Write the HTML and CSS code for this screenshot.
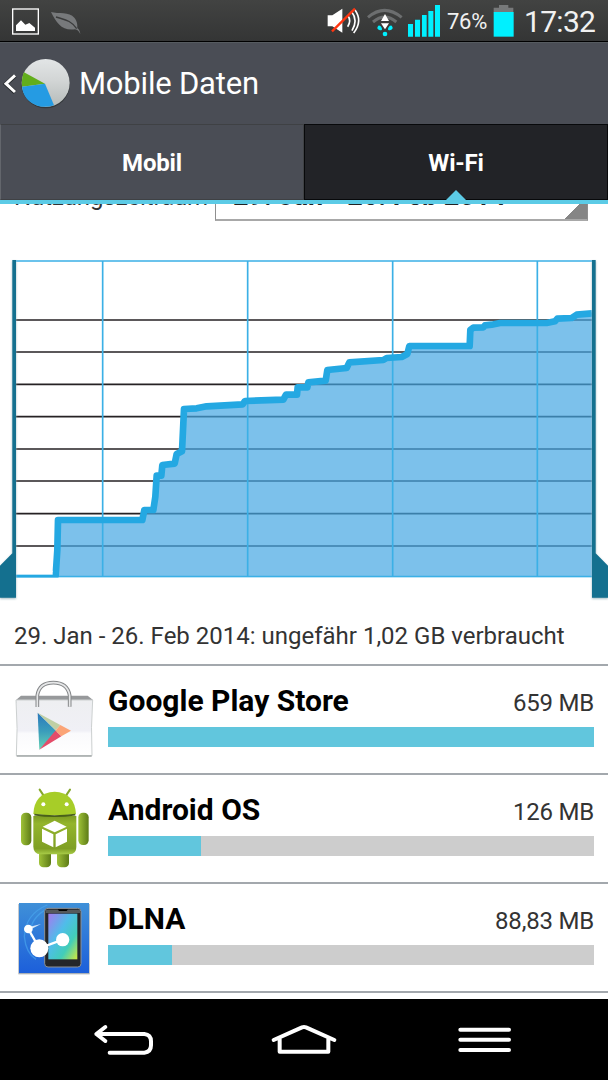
FILE: index.html
```html
<!DOCTYPE html>
<html lang="de">
<head>
  <meta charset="UTF-8" />
  <meta name="viewport" content="width=device-width, initial-scale=1.0"/>
  <title>Mobile Daten</title>
  <link rel="stylesheet" href="styles.css">
</head>
<body>

  <div class="statusbar">
    <svg class="notifications" width="90" height="41" viewBox="0 0 270 123">
      <rect x="38" y="27" width="77" height="75" fill="none" stroke="#fff" stroke-width="4"/>
      <path d="M48 93V76l15-15 13 13 12-5 17 14v10z" fill="#fff"/>
      <path d="M153 36c22 6 55-1 70 17 10 12 9 24 9 31 6 5 8 11 9 18-5-9-9-13-16-14-40 5-55-19-72-52z" fill="#77797b"/>
      <path d="M168 51c25 8 45 9 62 35" fill="none" stroke="#3a3b3b" stroke-width="4"/>
    </svg>
    <svg class="signals" width="117" height="41" viewBox="0 0 351 123">
      <path d="M11 46h14l30-20v72L25 79H11z" fill="#fff"/>
      <path d="M71 46q12 16 0 34M82 34q21 27 2 58M93 30q24 33-4 69" fill="none" stroke="#fff" stroke-width="5"/>
      <path d="M24 94l69-68" stroke="#ff3510" stroke-width="7"/>
      <path d="M132 52q49-42 101 0" fill="none" stroke="#6c6e6f" stroke-width="9"/>
      <path d="M147 66q35-29 70 0" fill="none" stroke="#6c6e6f" stroke-width="9"/>
      <path d="M171 63l12-21 12 21zM171 70h24l-12 18z" fill="#fff"/>
      <path d="M163 77q6-2 10 6 4 8-5 8-13-5-5-14zM203 77q-6-2-10 6-4 8 5 8 13-5 5-14z" fill="#00f0ff"/>
      <circle cx="183" cy="102" r="7" fill="#00f0ff"/>
      <path d="M252 72h15v38h-15zM273 59h15v51h-15zM294 45h14v65h-14zM313 33h15v77h-15zM333 15h15v95h-15z" fill="#00f0ff"/>
    </svg>
    <span class="percent">76%</span>
    <svg class="battery" width="22" height="41" viewBox="0 0 66 123">
      <path d="M18 15h28v8h15v14H2V23h16z" fill="#77797a"/>
      <path d="M2 36h60v74H2z" fill="#00f0ff"/>
    </svg>
    <span class="clock">17:32</span>
  </div>

  <div class="header">
    <svg width="72" height="81" viewBox="0 0 216 243">
      <defs>
        <linearGradient id="pie" x2="0" y2="1">
          <stop offset="0" stop-color="#e2e5e6"/>
          <stop offset=".45" stop-color="#d2d5d5"/>
          <stop offset="1" stop-color="#b5bbb9"/>
        </linearGradient>
      </defs>
      <path d="M45 98l-27 25 27 25" fill="none" stroke="#25282b" stroke-width="13"/>
      <path d="M45 97l-27 25 27 25" fill="none" stroke="#fff" stroke-width="9"/>
      <circle cx="137" cy="123" r="73" fill="#34383b"/>
      <circle cx="137" cy="120" r="72" fill="url(#pie)"/>
      <path d="M135 122L72 88q-8 15-6 43z" fill="#62ae1c"/>
      <path d="M135 122l-69 9q4 42 48 58 24 6 48-2z" fill="#259be3"/>
    </svg>
    <h1>Mobile Daten</h1>
  </div>

  <div class="tabs">
    <div class="tab">Mobil</div>
    <div class="tab active">Wi-Fi</div>
  </div>

  <div class="content">
    <div class="cycle">
      <span class="cycle-label">Nutzungszeitraum</span>
      <div class="spinner"><span>29. Jan - 26. Feb 2014</span></div>
    </div>

    <svg class="chart" width="608" height="360" viewBox="0 0 1824 1080">
      <!-- horizontal grid -->
      <path d="M48 210H1776M48 306H1776M48 403H1776M48 500H1776M48 597H1776M48 693H1776M48 791H1776M48 888H1776" stroke="#262224" stroke-width="5"/>
      <path class="area" d="M167 980L172 900 174 810H430L433 780H462L466 740 470 677H484L487 645 526 641 530 612 546 606 550 477 600 475 728 463 735 453 850 449 858 434H893V412H925V397L980 392 982 360 1040 354 1048 337 1150 330 1160 324 1205 321 1222 312 1228 288H1409L1411 240 1420 233 1450 232 1455 226 1475 224 1480 219H1640L1665 214 1672 206 1715 204 1730 194 1776 190V980z"/>
      <!-- weeks and frame -->
      <path d="M308 33V980M743 33V980M1178 33V980M1612 33V980M48 33H1776M48 980H1776" fill="none" stroke="#3bb0e6" stroke-width="5"/>
      <path class="line" d="M48 977H167L172 900 174 810H427L433 780H460L466 740 470 677H484L487 645 524 641 530 612 546 604 552 477 590 475 620 469 728 463 735 453 850 449 858 434H891L893 412H922L925 397 977 392 982 360 1040 354 1048 337 1150 330 1160 324 1205 321 1222 312 1228 288H1409L1411 240 1420 233 1450 232 1455 226 1475 224 1500 219H1640L1665 214 1672 206 1715 204 1730 194 1776 190"/>
      <rect x="46" y="983" width="1732" height="10" fill="#fff"/>
      <rect x="46" y="962" width="112" height="12" fill="#fff"/>
      <path class="handle" d="M37 30H48V1043H0V947L37 910zM1776 30H1787V910L1824 947V1043H1776z"/>
    </svg>

    <div class="summary"><span>29. Jan - 26. Feb 2014: ungefähr 1,02 GB verbraucht</span></div>

    <div class="app">
      <svg class="icon" width="108" height="107" viewBox="0 0 324 321">
        <defs>
          <linearGradient id="bag" x2="0" y2="1">
            <stop offset="0" stop-color="#eeeff1"/>
            <stop offset=".55" stop-color="#f0f0f6"/>
            <stop offset=".6" stop-color="#fafafc"/>
            <stop offset="1" stop-color="#fff"/>
          </linearGradient>
          <linearGradient id="play" x2="0" y2="1">
            <stop offset="0" stop-color="#2b78bd"/>
            <stop offset=".5" stop-color="#3a9dbb"/>
            <stop offset="1" stop-color="#69d3b5"/>
          </linearGradient>
        </defs>
        <path d="M49 101l14-12h200l15 12-2 10H48z" fill="#97999b"/>
        <path d="M48 102h230q-6 80-2 167H49q5-80-1-167z" fill="url(#bag)" stroke="#ccd0d0" stroke-width="3"/>
        <path d="M50 270h225" stroke="#a3a9a9" stroke-width="4"/>
        <path d="M112 123V88Q118 50 160 50t49 38v34" fill="none" stroke="#858789" stroke-width="11"/>
        <path d="M112 123V88Q118 50 160 50t49 38v34" fill="none" stroke="#e6e7e8" stroke-width="5"/>
        <path d="M113 140l58 57-53 54z" fill="url(#play)"/>
        <path d="M113 140l68 37-14 16z" fill="#bfcfa4"/>
        <path d="M181 177l32 17-29 17-18-17z" fill="#fba477"/>
        <path d="M166 194l18 17-66 40z" fill="#e44c69"/>
      </svg>
      <div class="info">
        <div class="row"><span class="name">Google Play Store</span><span class="size">659 MB</span></div>
        <div class="bar"><div class="fill" style="width: 100%"></div></div>
      </div>
    </div>

    <div class="app">
      <svg class="icon" width="108" height="107" viewBox="0 0 324 321">
        <defs>
          <linearGradient id="green" x2="0" y2="1">
            <stop offset="0" stop-color="#7d9c22"/>
            <stop offset=".2" stop-color="#94b52c"/>
            <stop offset=".85" stop-color="#7f9f24"/>
            <stop offset="1" stop-color="#a9cd48"/>
          </linearGradient>
          <linearGradient id="limb">
            <stop offset="0" stop-color="#9fc238"/>
            <stop offset="1" stop-color="#5d7b17"/>
          </linearGradient>
        </defs>
        <path d="M119 44l12 18M210 44l-12 18" stroke="#86a82c" stroke-width="6" stroke-linecap="round"/>
        <rect x="117" y="220" width="36" height="57" rx="13" fill="url(#limb)"/>
        <rect x="171" y="220" width="36" height="57" rx="13" fill="url(#limb)"/>
        <rect x="63" y="113" width="31" height="98" rx="14" fill="url(#limb)"/>
        <rect x="235" y="113" width="31" height="97" rx="14" fill="url(#limb)"/>
        <path d="M100 123h129v92q0 22-20 23h-88q-20-1-21-23z" fill="url(#green)"/>
        <path d="M100 117Q103 53 164 50q60 3 64 67-60 8-128 0z" fill="#a7cd28"/>
        <path d="M103 119q60 9 123 0" fill="none" stroke="#49601a" stroke-width="5"/>
        <circle cx="130" cy="88" r="6" fill="#fff"/>
        <circle cx="200" cy="88" r="6" fill="#fff"/>
        <path d="M128 155l36-18 36 18-36 17zM126 161l34 17v39l-34-17zM167 178l34-17v39l-34 17z" fill="#fff"/>
      </svg>
      <div class="info">
        <div class="row"><span class="name">Android OS</span><span class="size">126 MB</span></div>
        <div class="bar"><div class="fill" style="width: 19.1%"></div></div>
      </div>
    </div>

    <div class="app">
      <svg class="icon" width="108" height="107" viewBox="0 0 324 321">
        <defs>
          <linearGradient id="blue" x2="0" y2="1">
            <stop offset="0" stop-color="#3f90d8"/>
            <stop offset="1" stop-color="#1c5fda"/>
          </linearGradient>
          <linearGradient id="screen" x2="1" y2="1">
            <stop offset="0" stop-color="#a57aef"/>
            <stop offset=".4" stop-color="#4fbde9"/>
            <stop offset=".7" stop-color="#42cdb9"/>
            <stop offset="1" stop-color="#d3e83b"/>
          </linearGradient>
        </defs>
        <rect x="55" y="60" width="214" height="211" fill="#aab0b6"/>
        <rect x="57" y="57" width="210" height="210" fill="url(#blue)"/>
        <path d="M142 63Q76 90 73 158q5 50 35 68M132 80Q84 112 93 160" fill="none" stroke="#4baaf0" stroke-width="4" opacity=".6"/>
        <rect x="134" y="73" width="109" height="176" rx="10" fill="#24262a" stroke="#8d9296" stroke-width="3"/>
        <path d="M137 77h103v10H137z" fill="#55595d"/>
        <path d="M173 76h31l-4 5h-23z" fill="#000"/>
        <rect x="145" y="89" width="87" height="137" fill="url(#screen)"/>
        <path d="M85 135l33 58 70-26" fill="none" stroke="#fff" stroke-width="7"/>
        <path d="M90 128l33-8-29 15z" fill="#d5e8fa"/>
        <circle cx="85" cy="135" r="13" fill="#fff"/>
        <circle cx="118" cy="193" r="27" fill="#fff"/>
        <circle cx="188" cy="167" r="20" fill="#fff"/>
      </svg>
      <div class="info">
        <div class="row"><span class="name">DLNA</span><span class="size">88,83 MB</span></div>
        <div class="bar"><div class="fill" style="width: 13.1%"></div></div>
      </div>
    </div>
  </div>

  <div class="navbar">
    <svg width="470" height="81" viewBox="0 0 1410 243" fill="none" stroke="#fff" stroke-width="12" stroke-linecap="round" stroke-linejoin="round">
      <path d="M106 84L79 105l27 21M80 105H223q20 2 20 22v12q0 20-20 22H119"/>
      <path d="M611 123l85-38q6-2 12 0l85 38M629 120v38H775v-38"/>
      <path d="M1171 92h146M1171 122h146M1171 153h146"/>
    </svg>
  </div>

</body>
</html>
```
FILE: styles.css
```css
* {
  box-sizing: border-box;
}
body {
  margin: 0;
  width: 608px;
  height: 1080px;
  display: flex;
  flex-direction: column;
  overflow: hidden;
  background: #fff;
  font-family: Roboto, sans-serif;
}
svg {
  display: block;
  flex: none;
}
.statusbar {
  height: 42px;
  display: flex;
  align-items: flex-start;
  background: linear-gradient(#424342, #343535);
  border-bottom: 1px solid #000;
  color: #f1f1f1;
}
.signals {
  margin-left: 234px;
}
.percent {
  width: 46px;
  padding-left: 6px;
  font-size: 22px;
  line-height: 44px;
  letter-spacing: -0.3px;
}
.battery {
  margin-left: 6px;
}
.clock {
  padding-left: 9px;
  font-size: 30px;
  line-height: 43px;
  letter-spacing: -0.7px;
}
.header {
  height: 82px;
  display: flex;
  align-items: center;
  background: #4a4d55;
  border-top: 1px solid #565b60;
}
h1 {
  margin: 0 0 0 7px;
  font-size: 31px;
  font-weight: normal;
  letter-spacing: -0.2px;
  color: #fff;
  white-space: nowrap;
}
.tabs {
  height: 80px;
  flex: none;
  display: flex;
  border-bottom: 4px solid #5ccbe6;
}
.tab {
  flex: 1;
  position: relative;
  background: #4a4d55;
  border: 1px solid #3f4144;
  border-left-color: #63666c;
  color: #fff;
  font-size: 24px;
  font-weight: bold;
  letter-spacing: -0.2px;
  line-height: 77px;
  text-align: center;
}
.tab.active {
  background: #222327;
  border: 1px solid #08090b;
}
.tab.active::after {
  content: "";
  position: absolute;
  left: 50%;
  bottom: -1px;
  margin-left: -10px;
  border: 10px solid transparent;
  border-top: 0;
  border-bottom-color: #5ccbe6;
}
.content {
  height: 795px;
  flex: none;
  overflow: hidden;
}
/* scrolled partly under the tabs */
.cycle {
  height: 76px;
  margin-top: -30px;
  display: flex;
  color: #333;
}
.cycle-label {
  width: 215px;
  padding-left: 14px;
  font-size: 24px;
  letter-spacing: -0.1px;
  line-height: 46px;
}
.spinner {
  width: 373px;
  height: 47px;
  padding-left: 17px;
  border: 1px solid #8f8f8f;
  border-bottom: 2px solid #a8a8a8;
  background: linear-gradient(135deg, transparent 50%, #858585 50%) right bottom / 23px 23px no-repeat;
  color: #222;
  font-size: 27px;
  font-weight: bold;
  line-height: 43px;
}
.summary {
  height: 56px;
  border-bottom: 2px solid #a3a8ad;
  padding-left: 14px;
  color: #333;
  font-size: 24px;
  line-height: 53px;
  white-space: nowrap;
}
.area {
  fill: #44a6e3;
  opacity: 0.7;
}
.line {
  fill: none;
  stroke: #24a8e2;
  stroke-width: 20;
  stroke-linejoin: round;
}
.handle {
  fill: #14708f;
  filter: drop-shadow(0 3px 3px #9fb8c0);
}
.app {
  height: 109px;
  display: flex;
  border-bottom: 2px solid #a3a8ad;
}
.info {
  width: 486px;
}
.row {
  height: 61px;
  display: flex;
  justify-content: space-between;
  line-height: 70px;
  white-space: nowrap;
}
.name {
  color: #000;
  font-size: 30px;
  font-weight: bold;
}
.size {
  color: #333;
  font-size: 24px;
  letter-spacing: -0.2px;
  line-height: 75px;
}
.bar {
  height: 20px;
  background: #cdcdcd;
}
.fill {
  height: 20px;
  background: #61c6dd;
}
.navbar {
  height: 81px;
  flex: none;
  padding-left: 70px;
  background: #000;
}
```
